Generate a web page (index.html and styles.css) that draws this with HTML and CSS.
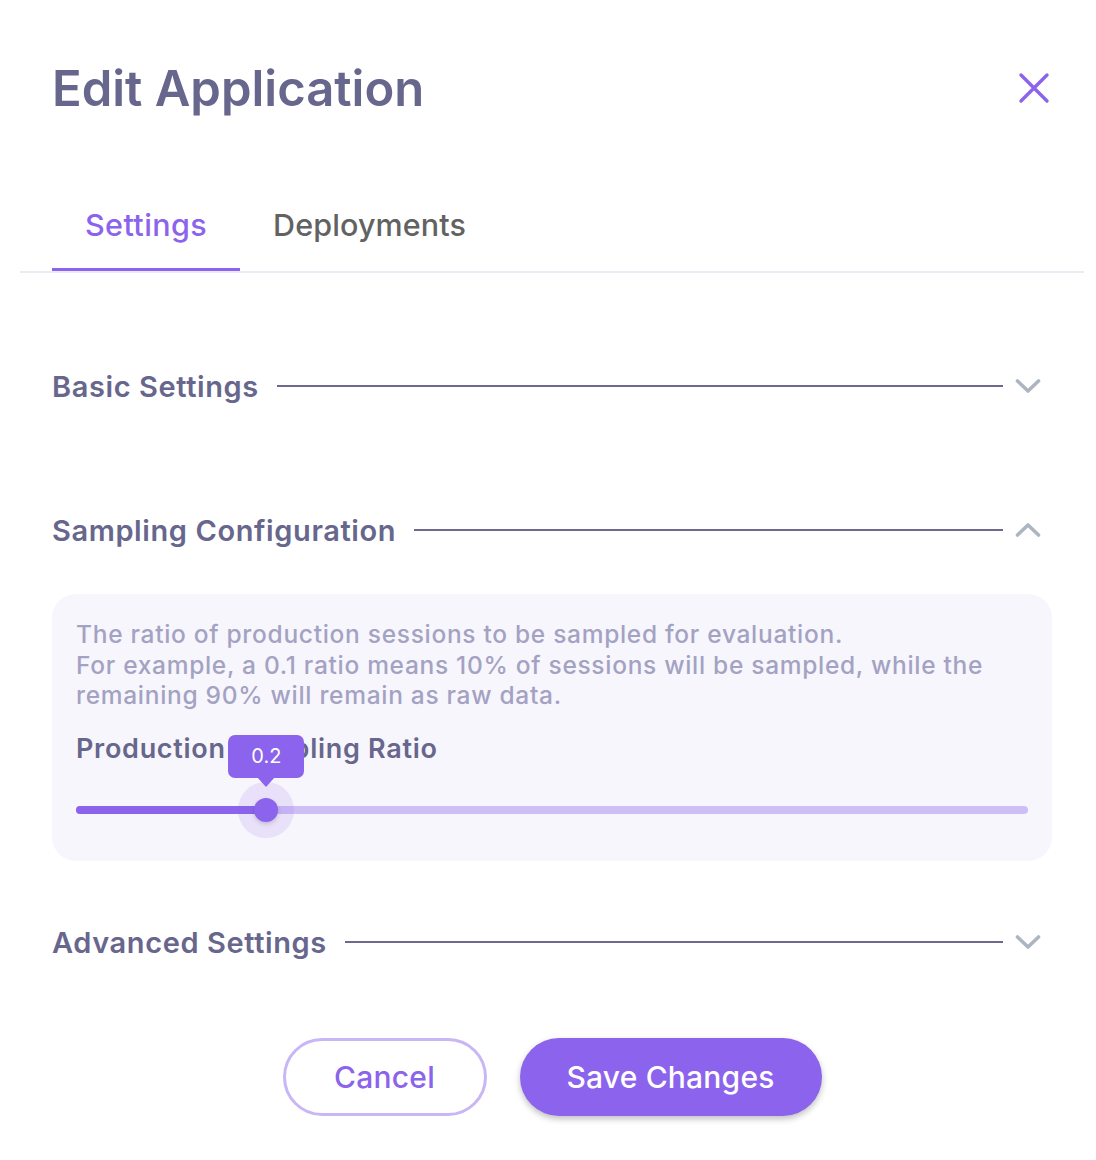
FILE: index.html
```html
<!DOCTYPE html>
<html lang="en">
<head>
<meta charset="utf-8">
<title>Edit Application</title>
<link rel="stylesheet" href="styles.css">
</head>
<body>
<div class="dialog">
  <header class="dialog-header">
    <h1 class="dialog-title">Edit Application</h1>
    <button class="close-btn" aria-label="Close">
      <svg width="32" height="32" viewBox="0 0 32 32"><path d="M3 3 L29 29 M29 3 L3 29" stroke="#8b63ec" stroke-width="3.4" stroke-linecap="round" fill="none"/></svg>
    </button>
  </header>

  <nav class="tabs">
    <div class="tab active">Settings</div>
    <div class="tab">Deployments</div>
  </nav>

  <main class="content">
    <section class="section section-basic">
      <div class="section-header">
        <h2 class="section-title">Basic Settings</h2>
        <span class="section-line"></span>
        <span class="chevron">
          <svg width="26" height="16" viewBox="0 0 26 16"><path d="M2.5 3 L13 13 L23.5 3" stroke="#adb5c2" stroke-width="3.6" stroke-linecap="round" stroke-linejoin="round" fill="none"/></svg>
        </span>
      </div>
    </section>

    <section class="section section-sampling">
      <div class="section-header">
        <h2 class="section-title">Sampling Configuration</h2>
        <span class="section-line"></span>
        <span class="chevron">
          <svg width="26" height="16" viewBox="0 0 26 16"><path d="M2.5 13 L13 3 L23.5 13" stroke="#adb5c2" stroke-width="3.6" stroke-linecap="round" stroke-linejoin="round" fill="none"/></svg>
        </span>
      </div>
      <div class="sampling-box">
        <p class="help-text">The ratio of production sessions to be sampled for evaluation.<br>For example, a 0.1 ratio means 10% of sessions will be sampled, while the remaining 90% will remain as raw data.</p>
        <div class="field-label">Production Sampling Ratio</div>
        <div class="slider">
          <div class="slider-rail"></div>
          <div class="slider-track" style="width: 20%"></div>
          <div class="slider-thumb" style="left: 20%">
            <div class="slider-tooltip">0.2</div>
          </div>
        </div>
      </div>
    </section>

    <section class="section section-advanced">
      <div class="section-header">
        <h2 class="section-title">Advanced Settings</h2>
        <span class="section-line"></span>
        <span class="chevron">
          <svg width="26" height="16" viewBox="0 0 26 16"><path d="M2.5 3 L13 13 L23.5 3" stroke="#adb5c2" stroke-width="3.6" stroke-linecap="round" stroke-linejoin="round" fill="none"/></svg>
        </span>
      </div>
    </section>

    <div class="actions">
      <button class="btn btn-outline">Cancel</button>
      <button class="btn btn-primary">Save Changes</button>
    </div>
  </main>
</div>
</body>
</html>
```

FILE: styles.css
```css
* { box-sizing: border-box; }

html, body {
  margin: 0;
  padding: 0;
  background: #ffffff;
}

body {
  font-family: Inter, "Noto Sans", "Liberation Sans", sans-serif;
  color: #67668c;
}

.dialog {
  width: 1096px;
  min-height: 1160px;
  padding: 0 12px 0 20px;
}

.dialog-header {
  height: 176px;
  display: flex;
  align-items: center;
  justify-content: space-between;
  padding: 0 34px 0 32px;
}

.dialog-title {
  margin: 0;
  font-size: 49px;
  font-weight: 600;
  color: #67668c;
  line-height: 1;
}

.close-btn {
  border: 0;
  background: transparent;
  padding: 0;
  width: 32px;
  height: 32px;
  display: flex;
  cursor: pointer;
}

.tabs {
  display: flex;
  padding-left: 32px;
  border-bottom: 2px solid #ecebf5;
  width: 1064px;
  height: 97px;
}

.tab {
  padding: 31px 33px 0;
  height: 95px;
  font-size: 30.5px;
  font-weight: 500;
  letter-spacing: 0.1px;
  line-height: 36px;
  color: #626262;
  border-bottom: 3px solid transparent;
}

.tab.active {
  color: #8b63ec;
  border-bottom-color: #8b63ec;
  letter-spacing: 0.4px;
}

.content {
  padding: 83px 32px 0 32px;
}

.section-header {
  display: flex;
  align-items: center;
  height: 60px;
}

.section-title {
  margin: 0 18px 0 0;
  font-size: 29px;
  font-weight: 600;
  letter-spacing: 0.6px;
  color: #67668c;
  white-space: nowrap;
}

.section-line {
  flex: 1;
  height: 2px;
  background: #6b6a8e;
}

.chevron {
  width: 49px;
  display: flex;
  justify-content: center;
  align-items: center;
}

.section-basic { margin-bottom: 84px; }
.section-sampling { margin-bottom: 51px; }

.sampling-box {
  margin-top: 34px;
  background: #f7f6fc;
  border-radius: 24px;
  padding: 25px 24px 0;
  height: 267px;
}

.help-text {
  margin: 0;
  font-size: 24.5px;
  letter-spacing: 0.7px;
  line-height: 30.5px;
  font-weight: 500;
  color: #a3a2c3;
}

.field-label {
  margin-top: 21px;
  font-size: 27px;
  letter-spacing: 0.7px;
  line-height: 34px;
  font-weight: 600;
  color: #67668c;
}

.slider {
  position: relative;
  margin-top: 28px;
  height: 32px;
}

.slider-rail {
  position: absolute;
  left: 0;
  right: 0;
  top: 12px;
  height: 8px;
  border-radius: 4px;
  background: #cdbff5;
}

.slider-track {
  position: absolute;
  left: 0;
  top: 12px;
  height: 8px;
  border-radius: 4px;
  background: #8b63ec;
}

.slider-thumb {
  position: absolute;
  top: 16px;
  width: 24px;
  height: 24px;
  margin: -12px 0 0 -12px;
  border-radius: 50%;
  background: #8b63ec;
  box-shadow: 0 0 0 16px rgba(139, 99, 236, 0.14), 0 2px 4px rgba(0, 0, 0, 0.18);
}

.slider-tooltip {
  position: absolute;
  left: 50%;
  bottom: 44px;
  transform: translateX(-50%);
  width: 76px;
  height: 43px;
  border-radius: 7px;
  background: #8b63ec;
  color: #ffffff;
  font-size: 20px;
  font-weight: 400;
  line-height: 43px;
  text-align: center;
}

.slider-tooltip::after {
  content: "";
  position: absolute;
  left: 50%;
  bottom: -9px;
  margin-left: -9px;
  border-left: 9px solid transparent;
  border-right: 9px solid transparent;
  border-top: 10px solid #8b63ec;
}

.actions {
  margin-top: 66px;
  display: flex;
  justify-content: center;
  gap: 33px;
}

.btn {
  height: 78px;
  border-radius: 39px;
  font-family: inherit;
  font-size: 30px;
  letter-spacing: 0.2px;
  font-weight: 500;
  cursor: pointer;
}

.btn-outline {
  width: 204px;
  background: #ffffff;
  border: 3px solid #c9b6f6;
  color: #8b63ec;
}

.btn-primary {
  width: 302px;
  background: #8b63ec;
  border: 0;
  color: #ffffff;
  box-shadow: 0 3px 6px rgba(0, 0, 0, 0.25);
}
```
